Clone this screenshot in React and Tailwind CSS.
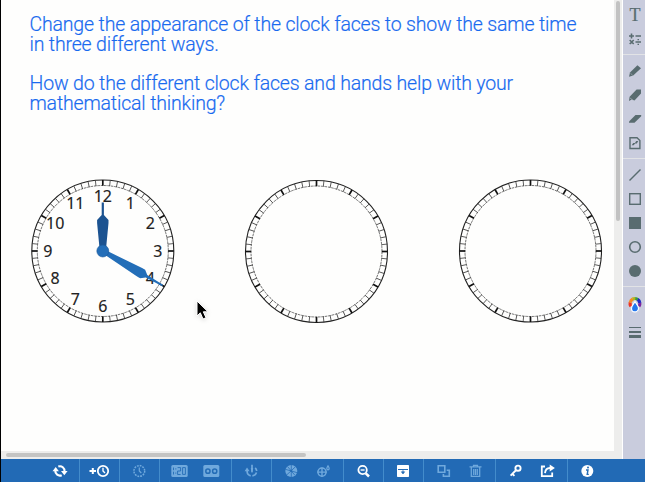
const ticks = Array.from({ length: 60 }, (_, i) => i);
const hours = [1, 2, 3, 4, 5, 6, 7, 8, 9, 10, 11, 12];

function Clock({ cx = 72, cy = 72, face = false }) {
  return (
    <svg className="block h-[144px] w-[144px] shrink-0 overflow-visible" viewBox="0 0 144 144">
      <g transform={`translate(${cx} ${cy})`}>
        <circle r="71" fill="#fefefd" stroke="#222" strokeWidth="1.1" />
        <circle r="65.5" fill="none" stroke="#444" strokeWidth="0.75" strokeDasharray="2.6 .8" />
        {ticks.map((i) => (
          <line key={i} y1="-71" y2="-65.3" stroke={i % 5 ? "#333" : "#111"} strokeWidth={i % 5 ? 0.75 : 1.7} transform={`rotate(${i * 6})`} />
        ))}
        {face && (
          <>
            {hours.map((h) => (
              <text key={h} x={55 * Math.sin((h * Math.PI) / 6)} y={-55 * Math.cos((h * Math.PI) / 6) + 5.9} textAnchor="middle" fontSize="16" fill="#222" stroke="#222" strokeWidth=".15" className="font-['Noto_Sans',sans-serif]">
                {h}
              </text>
            ))}
            <path d="M-1.1-48.5H1.1V-36L5.7-31V-28L3.4-4H-3.4L-5.7-28V-31L-1.1-36Z" fill="#1c5391" />
            <path d="M-.8-69H.8L1.5-50.5 5-46V-42.5L2.2-4H-2.2L-5-42.5V-46L-1.5-50.5Z" fill="#236eb8" transform="rotate(120)" />
            <circle r="6" fill="#236eb8" stroke="#1c5a9c" strokeWidth=".6" />
          </>
        )}
      </g>
    </svg>
  );
}

function SideIcon({ children }) {
  return (
    <svg className="block h-6 w-[22px] shrink-0 text-[#596c70]" viewBox="0 0 22 24" fill="none" stroke="currentColor" strokeWidth="1.4">
      {children}
    </svg>
  );
}

function SideRule({ className = "" }) {
  return <div className={`h-px w-full shrink-0 bg-[#e2e3e6] ${className}`} />;
}

function Sidebar() {
  return (
    <aside className="flex h-[459px] w-[22px] shrink-0 flex-col bg-[#c9ccdd] pt-[3px]">
      <SideIcon><text x="12" y="18" textAnchor="middle" fontSize="18" fill="currentColor" stroke="currentColor" strokeWidth=".2" className="font-['Liberation_Serif',serif]">T</text></SideIcon>
      <SideIcon>
        <path d="M6 9H11M8.5 6.5V11.5M12.5 9H18M6.7 13 10.7 17M10.7 13 6.7 17M12.5 15H18" strokeWidth="1.6" />
        <path d="M14.5 12.6H16M14.5 17.4H16" strokeWidth="1.3" />
      </SideIcon>
      <SideRule className="mt-[3px]" />
      <div className="h-1 shrink-0" />
      <SideIcon><path d="M6 17.7 7 13.6 14.4 6.3 18 9.3 10.2 16.6Z" fill="currentColor" stroke="none" /><path d="M7.5 14.3 9.7 16.3" stroke="#b1b8c5" strokeWidth=".6" /></SideIcon>
      <SideIcon><path d="M6 18 6.6 13.8 13.6 6.5H18V10.6L11.5 17.6 8.7 16.4Z" fill="currentColor" stroke="none" /><path d="M7 15 9.8 17" stroke="#b1b8c5" strokeWidth=".6" /></SideIcon>
      <SideIcon><path d="M6 15.8V14.6L12.5 8H18.2V9.2L11.5 15.8Z" fill="currentColor" stroke="none" /></SideIcon>
      <SideIcon><path d="M7 6.7H14L16.9 9.6V17.5H7Z" strokeWidth="1.4" /><path d="M8.7 14.3 10.2 11.9H11.9L13.3 10H15.3L13.8 12.4H12.1L10.7 14.3Z" fill="currentColor" stroke="none" /></SideIcon>
      <SideRule className="mt-[3px]" />
      <div className="h-1 shrink-0" />
      <SideIcon><path d="M6.5 17.5 17.5 6.5" /></SideIcon>
      <SideIcon><rect x="6.7" y="6.7" width="10.6" height="10.6" /></SideIcon>
      <SideIcon><rect x="6" y="6" width="12" height="12" fill="currentColor" stroke="none" /></SideIcon>
      <SideIcon><circle cx="12" cy="12" r="5.3" strokeWidth="1.6" /></SideIcon>
      <SideIcon><circle cx="12" cy="12" r="6" fill="currentColor" stroke="none" /></SideIcon>
      <SideRule className="mt-[3px]" />
      <div className="h-[5px] shrink-0" />
      <SideIcon>
        <g strokeWidth="3.2" transform="translate(0 -.8)">
          <path d="M7.9 15.2A5 5 0 0 1 7.2 11.2" stroke="#ef3424" />
          <path d="M7.2 11.3A5 5 0 0 1 9.8 7.8" stroke="#f58b24" />
          <path d="M9.7 7.8A5 5 0 0 1 12.3 7.3" stroke="#b7b51c" />
          <path d="M12.2 7.3A5 5 0 0 1 14.8 8.3" stroke="#3c9c3b" />
          <path d="M14.7 8.2A5 5 0 0 1 16.8 11.8" stroke="#1c28c4" />
          <path d="M16.8 11.7A5 5 0 0 1 16 15.2" stroke="#7a249f" />
        </g>
        <path d="M12 9.4C13.5 12.4 15.5 13.9 15.5 16.4A3.5 3.5 0 0 1 8.5 16.4C8.5 13.9 10.5 12.4 12 9.4Z" fill="#2377ee" stroke="white" strokeWidth="1.2" />
      </SideIcon>
      <div className="ml-[6px] mt-[11px] flex w-3 flex-col">
        <i className="h-px bg-[#596c70]" />
        <i className="mt-[3px] h-[2px] bg-[#596c70]" />
        <i className="mt-[2px] h-[3px] bg-[#596c70]" />
      </div>
    </aside>
  );
}

const icons = {
  refresh: <g strokeWidth="2.1"><path d="M4.3 7.5A4.6 4.6 0 0 0 10.7 12.2M7.3 3.6A4.6 4.6 0 0 1 13.5 8.5" /><path d="M1.5 8.2 4.7 3.9 7.9 8.2ZM10 8H16.6L13.3 12.3Z" fill="currentColor" stroke="none" /></g>,
  add: <><path d="M-1.5 8H5M1.8 5V11" strokeWidth="2" /><circle cx="12" cy="8" r="5.2" strokeWidth="1.8" /><path d="M12 4.8V8L14 10" strokeWidth="1.4" /></>,
  clock: <><circle cx="8.3" cy="8" r="5.4" strokeDasharray="1.8 1" strokeWidth="1.5" /><path d="M8.3 4.5V8L10.3 10" strokeWidth="1.2" /></>,
  digital: <><rect x="0.3" y="2" width="16.4" height="12" rx="1.5" fill="currentColor" stroke="none" /><path d="M2.5 4.5V7.2M2.5 8.7V11.5M4.8 5.3V6.5M4.8 9.5V10.7M6.6 4.6H9.6V8H6.6V11.5H9.6M11.6 4.6H14.4V11.4H11.6Z" stroke="#246cb6" strokeWidth=".9" /></>,
  pair: <><rect x="0.3" y="2" width="16" height="12" rx="1.5" fill="currentColor" stroke="none" /><circle cx="4.9" cy="8.2" r="2.1" stroke="#246cb6" strokeWidth="1.5" /><circle cx="11.7" cy="8.2" r="2.1" stroke="#246cb6" strokeWidth="1.5" /></>,
  hands: <><path d="M9 1.7V8.7M4.2 7.5A4.9 4.9 0 0 0 7.7 12.9M9.4 12.9A4.9 4.9 0 0 0 13.5 9.5M13.7 8A4.9 4.9 0 0 0 12.2 4.8" strokeWidth="1.7" /><path d="M7.8 5H10.2L9.6 9.5H8.4ZM1.6 8.2 4 4.6 6.6 8.2Z" fill="currentColor" stroke="none" /></>,
  wheel: <><circle cx="8.3" cy="8" r="6" fill="currentColor" stroke="none" /><path d="M8.3 2V14M2.3 6.3 14.3 9.7M3.6 12 12.6 3.6M4.5 3.5 12 12.4" stroke="#246cb6" strokeWidth=".8" /><circle cx="8.3" cy="8" r="1.1" fill="#246cb6" stroke="none" /></>,
  parts: <><circle cx="7" cy="9.1" r="4.1" strokeWidth="1.5" /><path d="M7 4.4V13.8M2.3 9.1H11.7" strokeWidth="1.4" /><path d="M13 2.8C14.6 5 14.5 6.8 13 6.8S11.4 5 13 2.8Z" strokeWidth="1.2" /></>,
  zoom: <><circle cx="7.6" cy="7" r="4.2" strokeWidth="1.8" /><path d="M5.6 7H9.6" strokeWidth="1.4" /><path d="M10.8 10.3 14 13.5" strokeWidth="2.5" /></>,
  screen: <><rect x="2" y="2" width="12" height="12" rx=".7" fill="currentColor" stroke="none" /><path d="M3 6.5H13" stroke="#246cb6" strokeWidth="1" /><path d="M8 7V9.4M6.4 8.8H9.6L8 11Z" fill="#246cb6" stroke="#246cb6" strokeWidth=".7" /></>,
  copy: <><path d="M3.2 2.7H9.8V9.3H3.2ZM11.7 7.3H14.3V13.2H8.4V11" strokeWidth="1.6" /></>,
  trash: <><path d="M2.5 3.8H14.5M6.5 3.4V2.3H10.5V3.4M4.3 4.5V13.3H12.7V4.5M6.7 6V12M10.3 6V12M8.5 6V12" strokeWidth="1.25" /></>,
  key: <><circle cx="11" cy="5.2" r="2.6" strokeWidth="1.9" /><path d="M9.2 7 3.6 12.7M5.4 10.8 7.4 12.8" strokeWidth="1.9" /></>,
  share: <><path d="M6 3.5H2.8V13.1H13.2V9.5" strokeWidth="1.8" /><path d="M6 10.2C6.3 6.8 8 5 11 5" strokeWidth="1.8" /><path d="M10.7 1.5 15.9 5 10.7 8.5Z" fill="currentColor" stroke="none" /></>,
  info: <><circle cx="8.3" cy="8" r="6" fill="currentColor" stroke="none" /><path d="M7 7H9L8.2 11.4H9.8" stroke="#246cb6" strokeWidth="1.4" /><circle cx="9" cy="4.6" r="1" fill="#246cb6" stroke="none" /></>,
};

const groups = [["refresh"], ["add"], ["clock"], ["digital", "pair"], ["hands"], ["wheel", "parts"], ["zoom"], ["screen"], ["copy", "trash"], ["key", "share"], ["info"]];
const dimmed = ["clock", "digital", "pair", "hands", "wheel", "parts", "copy", "trash"];

function Toolbar() {
  return (
    <footer className="flex h-[23px] shrink-0 bg-[#226ab5] pl-[39px]">
      {groups.map((group) => (
        <div key={group[0]} className="flex h-full items-center gap-4 border-r border-[#438ccb] pl-[11px] pr-3 last:border-r-0">
          {group.map((name) => (
            <svg key={name} className={`block h-4 w-4 overflow-visible ${dimmed.includes(name) ? "text-[#70a9dd]" : "text-white"}`} viewBox="0 0 16 16" fill="none" stroke="currentColor">
              {icons[name]}
            </svg>
          ))}
        </div>
      ))}
    </footer>
  );
}

export default function App() {
  return (
    <div className="flex h-[482px] w-[645px] flex-col overflow-hidden border-l border-black bg-[#fefefd]">
      <div className="flex h-[459px] shrink-0">
        <div className="flex w-[613px] shrink-0 flex-col">
          <main className="relative h-[451px] shrink-0 overflow-hidden">
            <div className="h-[179px] pl-[28.5px] pt-[15px] font-['Roboto',sans-serif] text-[19.5px] font-light leading-[20px] tracking-[-0.17px] text-[#1769ee] [-webkit-text-stroke:0.2px_#1f6ff2]">
              <p className="whitespace-nowrap">Change the appearance of the clock faces to show the same time<br />in three different ways.</p>
              <p className="mt-[19px] whitespace-nowrap">How do the different clock faces and hands help with your<br />mathematical thinking?</p>
            </div>
            <div className="flex gap-[70px] pl-[30px]">
              <Clock cx={71.8} face />
              <Clock cx={71.5} cy={72.5} />
              <Clock cx={71.5} />
            </div>
            <svg className="absolute left-[194px] top-[299px] h-[23px] w-[16px] drop-shadow-sm" viewBox="0 0 16 23">
              <path d="M2 2V17L5.3 13.8 8 20 11 18.7 8.3 12.8H13Z" fill="black" stroke="white" />
            </svg>
          </main>
          <div className="h-2 bg-[#ededec] pl-[5px] pt-[2px]"><div className="h-1 w-[300px] rounded-full bg-[#c4c4c3]" /></div>
        </div>
        <div className="flex w-2 shrink-0 justify-center bg-[#ededec] pt-px"><div className="h-[220px] w-1 rounded-full bg-[#c2c2c2]" /></div>
        <div className="w-px shrink-0 bg-white" />
        <Sidebar />
      </div>
      <Toolbar />
    </div>
  );
}
